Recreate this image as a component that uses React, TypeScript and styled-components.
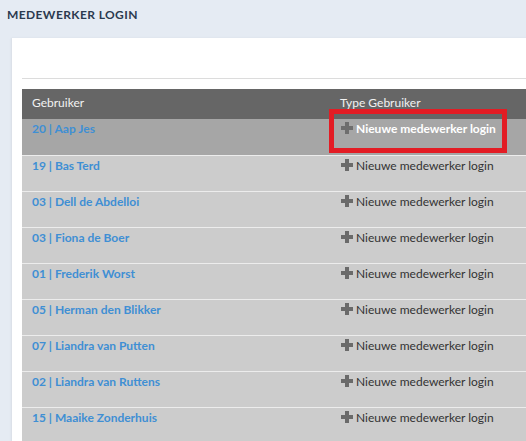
import React from "react";
import styled, { createGlobalStyle } from "styled-components";

const GlobalStyle = createGlobalStyle`
  html, body {
    margin: 0;
    padding: 0;
    overflow: hidden;
    background: #e5ebf3;
    font-family: Lato, "Open Sans", sans-serif;
  }
`;

type Employee = { nr: string; name: string };

const employees: Employee[] = [
  { nr: "20", name: "Aap Jes" },
  { nr: "19", name: "Bas Terd" },
  { nr: "03", name: "Dell de Abdelloi" },
  { nr: "03", name: "Fiona de Boer" },
  { nr: "01", name: "Frederik Worst" },
  { nr: "05", name: "Herman den Blikker" },
  { nr: "07", name: "Liandra van Putten" },
  { nr: "02", name: "Liandra van Ruttens" },
  { nr: "15", name: "Maaike Zonderhuis" },
];

const PlusIcon = ({ color }: { color: string }) => (
  <svg width="12" height="12" viewBox="0 0 12 12">
    <path d="M4 0h4v4h4v4h-4v4h-4v-4h-4v-4h4z" fill={color} />
  </svg>
);

const App = () => {
  return (
    <>
      <GlobalStyle />
      <Page>
        <PageTitle>MEDEWERKER LOGIN</PageTitle>
        <Panel>
          <Toolbar />
          <Table>
            <thead>
              <tr>
                <HeadCell $width={308}>Gebruiker</HeadCell>
                <HeadCell>Type Gebruiker</HeadCell>
              </tr>
            </thead>
            <tbody>
              {employees.map((e, i) => (
                <Row key={e.nr + e.name} $active={i === 0}>
                  <Cell>
                    <UserLink>
                      {e.nr} | {e.name}
                    </UserLink>
                  </Cell>
                  <Cell>
                    <ActionWrap>
                      <AddLogin $active={i === 0}>
                        <PlusIcon color={i === 0 ? "#6e6e6e" : "#6a6a6a"} />
                        Nieuwe medewerker login
                      </AddLogin>
                      {i === 0 && <Highlight />}
                    </ActionWrap>
                  </Cell>
                </Row>
              ))}
            </tbody>
          </Table>
        </Panel>
      </Page>
    </>
  );
};

const Page = styled.div`
  width: 580px;
  padding: 0 0 0 12px;
`;

const PageTitle = styled.h1`
  margin: 0 0 0 -5px;
  padding: 7px 0 0;
  height: 38px;
  box-sizing: border-box;
  font-size: 12px;
  line-height: 16px;
  font-weight: 700;
  color: #2b3a4f;
  letter-spacing: 0.4px;
`;

const Panel = styled.section`
  background: #fff;
  padding: 0 0 0 10px;
  box-shadow: -1px 0 2px rgba(0, 0, 0, 0.06);
  min-height: 420px;
`;

const Toolbar = styled.div`
  height: 40px;
  border-bottom: 1px solid #dcdcdc;
  margin-bottom: 10px;
`;

const Table = styled.table`
  width: 100%;
  border-collapse: collapse;
  font-size: 12px;
`;

const HeadCell = styled.th<{ $width?: number }>`
  background: #666;
  color: #f2f2f2;
  font-weight: 400;
  text-align: left;
  height: 30px;
  padding: 6px 10px 0;
  box-sizing: border-box;
  vertical-align: top;
  line-height: 16px;
  width: ${(p) => (p.$width ? `${p.$width}px` : "auto")};
`;

const Row = styled.tr<{ $active?: boolean }>`
  background: ${(p) => (p.$active ? "#a6a6a6" : "#cccccc")};
  border-bottom: 1px solid #ececec;
`;

const Cell = styled.td`
  height: 36px;
  padding: 2px 10px 0;
  box-sizing: border-box;
  vertical-align: top;
  line-height: 16px;
`;

const UserLink = styled.a`
  color: #3f8fd4;
  font-weight: 700;
  text-decoration: none;
  cursor: pointer;
`;

const ActionWrap = styled.div`
  position: relative;
`;

const AddLogin = styled.span<{ $active?: boolean }>`
  display: inline-flex;
  align-items: center;
  gap: 3px;
  margin-left: 1px;
  color: ${(p) => (p.$active ? "#fff" : "#333")};
  font-weight: ${(p) => (p.$active ? 700 : 400)};
  svg {
    margin-top: -2px;
  }
`;

const Highlight = styled.div`
  position: absolute;
  left: -11px;
  top: -12px;
  width: 178px;
  height: 44px;
  box-sizing: border-box;
  border: 5px solid #e31c24;
  pointer-events: none;
`;

export default App;
